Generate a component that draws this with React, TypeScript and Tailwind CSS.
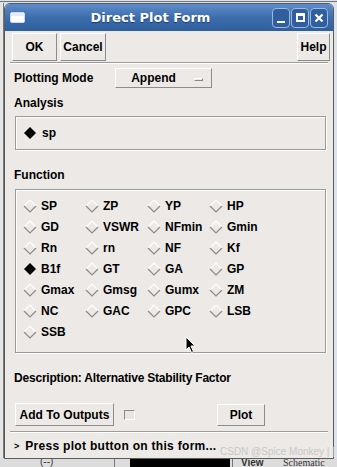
import React from 'react'

const functions = [
  'SP', 'ZP', 'YP', 'HP',
  'GD', 'VSWR', 'NFmin', 'Gmin',
  'Rn', 'rn', 'NF', 'Kf',
  'B1f', 'GT', 'GA', 'GP',
  'Gmax', 'Gmsg', 'Gumx', 'ZM',
  'NC', 'GAC', 'GPC', 'LSB',
  'SSB',
]

function Diamond({ on }: { on?: boolean }) {
  if (on) {
    return (
      <svg width="14" height="14" viewBox="0 0 14 14" className="shrink-0">
        <path d="M7 1 L13 7 L7 13 L1 7 Z" fill="#000" />
      </svg>
    )
  }
  return (
    <svg width="14" height="14" viewBox="0 0 14 14" className="shrink-0">
      <path d="M1 7 L7 1 L13 7" fill="none" stroke="#ffffff" strokeWidth="1.2" />
      <path d="M1 7 L7 13 L13 7" fill="none" stroke="#8a8a8a" strokeWidth="1.2" />
    </svg>
  )
}

const raised =
  'border border-t-white border-l-white border-r-[#8c8c8c] border-b-[#8c8c8c] bg-[#ece9e6] flex items-center justify-center'

function TitleButton({ children }: { children: React.ReactNode }) {
  return (
    <div className="w-[18px] h-[20px] rounded-[4px] border border-[#9fb8dc] bg-[#2f5f9e] flex items-center justify-center">
      {children}
    </div>
  )
}

export default function App() {
  return (
    <div className="relative w-[337px] h-[467px] overflow-hidden bg-[#dde2e8] pt-[3px] pl-[4px] font-['Liberation_Sans',Arial,sans-serif] text-[12px] font-bold text-black">
      {/* desktop behind the form */}
      <div className="absolute left-0 top-[1px] w-full h-[1px] bg-[#6d7580]" />
      <div className="absolute left-0 top-[3px] w-[4px] h-[460px] bg-[#e6e6e6] border-r border-[#777]" />
      <div className="absolute left-0 bottom-0 w-full h-[9px] bg-[#dcdcdc] flex items-end text-[10px] leading-[8px] font-normal text-[#333]">
        <div className="w-[115px] pl-[40px] border-r border-[#777] h-full">(--)</div>
        <div className="ml-[15px] w-[100px] h-full bg-black" />
        <div className="ml-[2px] w-[1px] h-full bg-[#777]" />
        <div className="pl-[8px] w-[50px] font-bold">View</div>
        <div className="font-['Liberation_Serif',serif] whitespace-nowrap">Schematic</div>
      </div>

      <div className="relative w-[330px] h-[456px] border border-[#5a5a5a] rounded-t-[6px] bg-[#ece9e6] flex flex-col">
        {/* title bar */}
        <div className="h-[27px] rounded-t-[5px] bg-gradient-to-b from-[#5f8dcb] via-[#3e6dad] to-[#2f5e9e] flex items-center px-[5px]">
          <div className="w-[15px] h-[11px] rounded-[2px] bg-white border border-[#cfd9e8] flex flex-col">
            <div className="h-[3px] bg-[#e6ecf5]" />
          </div>
          <div className="flex-1 text-center pl-[4px] font-['DejaVu_Sans',sans-serif] text-[13px] text-white [text-shadow:0_1px_1px_#1c3b66]">
            Direct Plot Form
          </div>
          <div className="flex gap-[1px]">
            <TitleButton>
              <div className="w-[8px] h-[2px] bg-white mt-[8px]" />
            </TitleButton>
            <TitleButton>
              <div className="w-[9px] h-[9px] border-2 border-white border-t-[3px]" />
            </TitleButton>
            <TitleButton>
              <svg width="10" height="10" viewBox="0 0 10 10">
                <path d="M1.5 1.5 L8.5 8.5 M8.5 1.5 L1.5 8.5" stroke="#fff" strokeWidth="2.2" />
              </svg>
            </TitleButton>
          </div>
        </div>

        {/* top buttons */}
        <div className="h-[31px] flex items-end pl-[7px] pr-[3px] pb-[1px]">
          <div className={`${raised} w-[45px] h-[28px]`}>OK</div>
          <div className={`${raised} w-[46px] h-[28px] ml-[3px]`}>Cancel</div>
          <div className="flex-1" />
          <div className={`${raised} w-[33px] h-[28px]`}>Help</div>
        </div>
        <div className="mx-[5px] border-t border-t-[#9c9c9c] border-b border-b-white" />

        {/* plotting mode */}
        <div className="mt-[4px] h-[20px] flex items-center pl-[9px]">
          <div className="w-[101px]">Plotting Mode</div>
          <div className={`${raised} w-[97px] h-[20px] relative`}>
            <span className="mr-[20px]">Append</span>
            <div className="absolute right-[8px] top-[9px] w-[9px] h-[3px] border border-t-white border-l-white border-r-[#888] border-b-[#888]" />
          </div>
        </div>

        {/* analysis */}
        <div className="mt-[7px] h-[16px] leading-[16px] pl-[9px]">Analysis</div>
        <div className="mt-[5px] ml-[10px] w-[311px] h-[34px] border border-[#9a9a9a] shadow-[inset_1px_1px_0_#fff,1px_1px_0_#fff] flex items-center pl-[7px] gap-[5px]">
          <Diamond on />
          <span>sp</span>
        </div>

        {/* function */}
        <div className="mt-[17px] h-[16px] leading-[16px] pl-[9px]">Function</div>
        <div className="mt-[6px] ml-[10px] w-[311px] h-[164px] border border-[#9a9a9a] shadow-[inset_1px_1px_0_#fff,1px_1px_0_#fff] pt-[5px] pl-[7px]">
          <div className="grid grid-cols-[62px_62px_62px_62px]">
            {functions.map((f) => (
              <div key={f} className="h-[21px] flex items-center gap-[4px]">
                <Diamond on={f === 'B1f'} />
                <span>{f}</span>
              </div>
            ))}
          </div>
          <svg width="12" height="18" viewBox="0 0 12 18" className="absolute left-[180px] top-[332px]">
            <path d="M1 1 L1 14 L4 11 L6.5 16.5 L8.5 15.5 L6 10 L10 10 Z" fill="#000" stroke="#fff" strokeWidth="1" />
          </svg>
        </div>

        {/* description */}
        <div className="mt-[17px] h-[16px] leading-[16px] pl-[9px] tracking-[-0.2px]">Description: Alternative Stability Factor</div>

        {/* bottom buttons */}
        <div className="mt-[17px] h-[23px] flex items-center pl-[10px]">
          <div className={`${raised} w-[99px] h-[23px]`}>Add To Outputs</div>
          <div className="ml-[10px] w-[11px] h-[10px] border border-t-[#8c8c8c] border-l-[#8c8c8c] border-r-white border-b-white bg-[#e8e6e3]" />
          <div className={`${raised} w-[48px] h-[22px] ml-[82px]`}>Plot</div>
        </div>
        <div className="mt-[5px] mx-[5px] border-t border-t-[#9c9c9c] border-b border-b-white" />

        {/* status */}
        <div className="mt-[5px] h-[16px] leading-[16px] pl-[9px] flex items-center gap-[6px]">
          <span className="text-[9px]">&gt;</span>
          <span className="tracking-[0.3px]">Press plot button on this form...</span>
        </div>
      </div>

      <div className="absolute left-[220px] top-[446px] text-[10px] leading-[11px] font-normal text-[#c8c8c8] whitespace-nowrap">
        CSDN @Spice Monkey | |
      </div>
    </div>
  )
}
